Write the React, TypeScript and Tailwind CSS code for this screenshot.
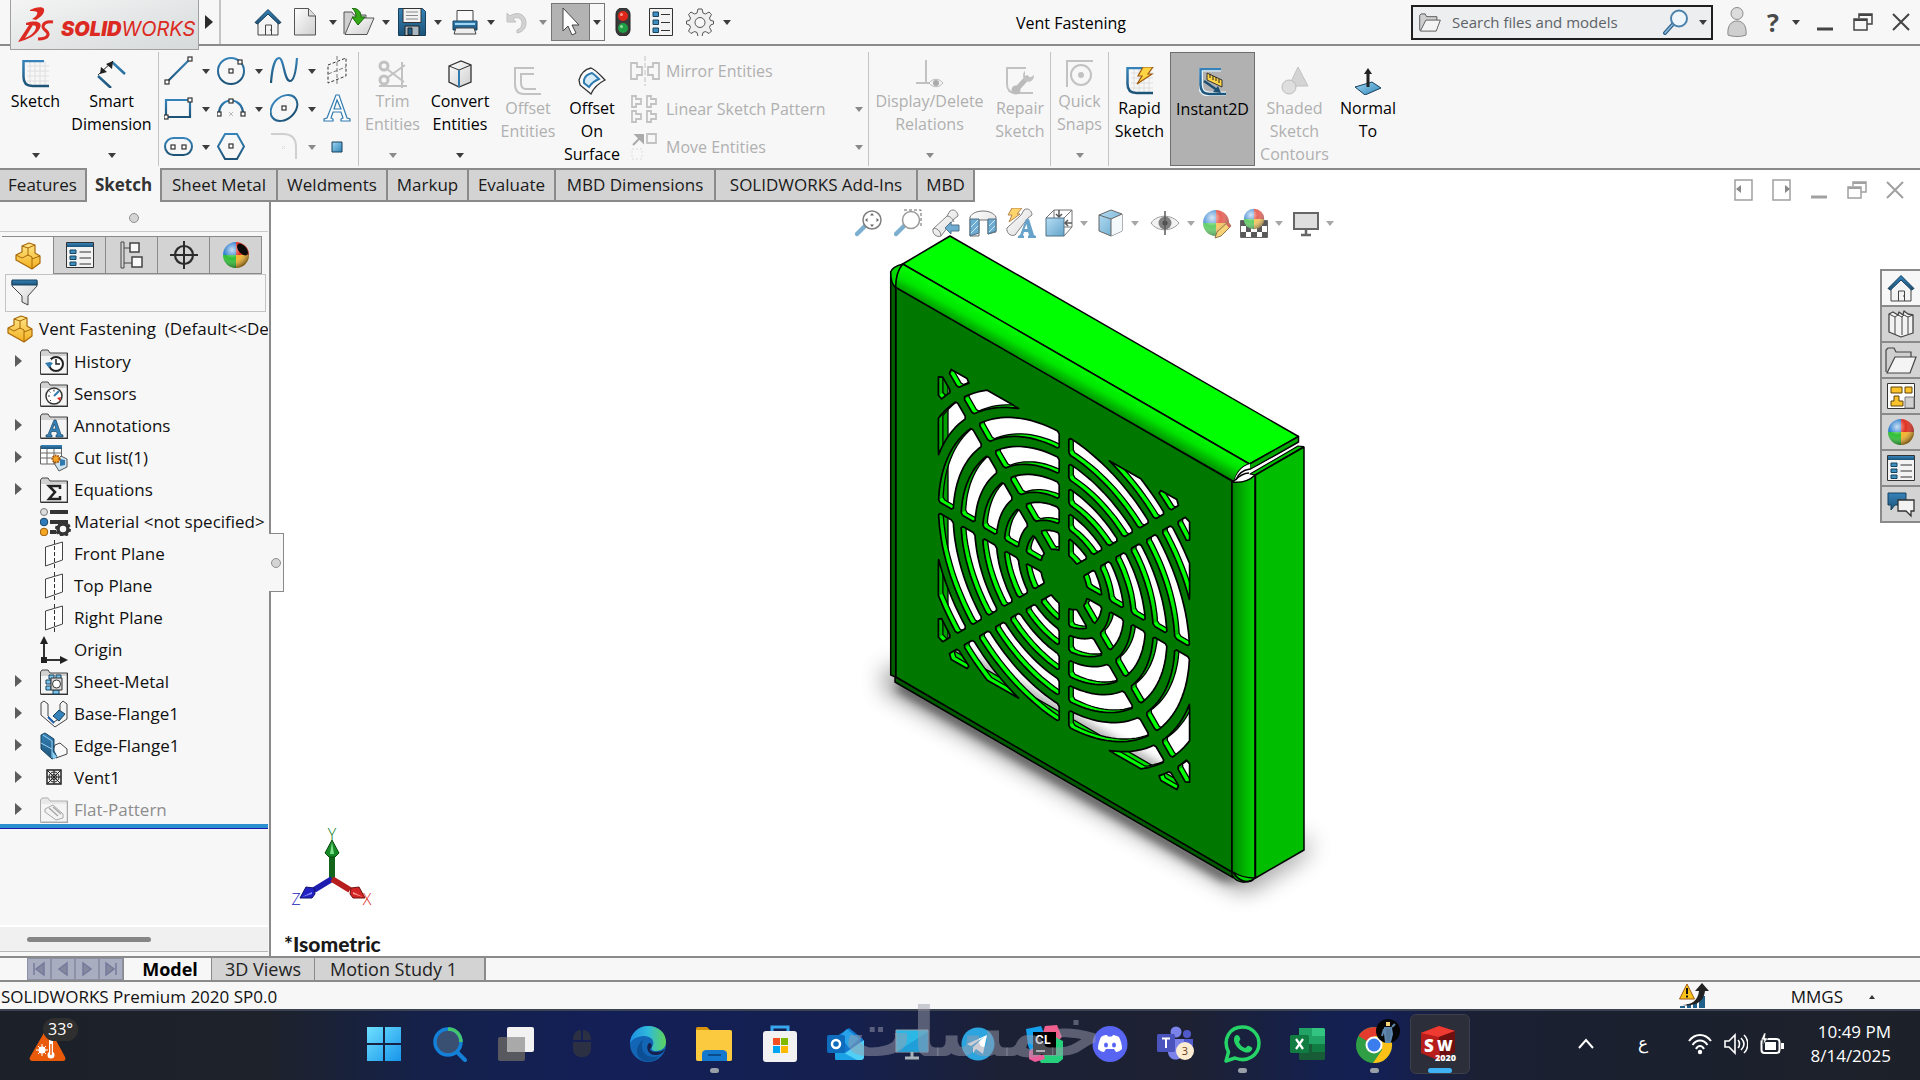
import type { ReactNode } from "react";

type Kids = { children?: ReactNode };

/* ---------- shared drawing helpers ---------- */

const Pic = ({ w = 28, h = 28, vb, children, className = "" }: Kids & { w?: number; h?: number; vb?: string; className?: string }) => (
    <svg width={w} height={h} viewBox={vb ?? `0 0 ${w} ${h}`} fill="none" className={`shrink-0 ${className}`} aria-hidden="true">
        {children}
    </svg>
);

const Caret = ({ dim = false, className = "" }: { dim?: boolean; className?: string }) => (
    <svg width="8" height="5" viewBox="0 0 8 5" className={`shrink-0 ${className}`} aria-hidden="true">
        <path d="M0 0h8L4 5z" fill={dim ? "#8a8a8a" : "#3c3c3c"} />
    </svg>
);

const Defs = () => (
    <svg width="0" height="0" className="absolute" aria-hidden="true">
        <defs>
            <linearGradient id="blue" x1="0" y1="0" x2="0" y2="1">
                <stop offset="0" stopColor="#3583ba" />
                <stop offset="1" stopColor="#1d5377" />
            </linearGradient>
            <linearGradient id="sky" x1="0" y1="0" x2="1" y2="1">
                <stop offset="0" stopColor="#9fd4f2" />
                <stop offset="1" stopColor="#2f86b8" />
            </linearGradient>
            <linearGradient id="paper" x1="0" y1="0" x2="1" y2="1">
                <stop offset="0" stopColor="#ffffff" />
                <stop offset="1" stopColor="#cfcfcf" />
            </linearGradient>
            <linearGradient id="gold" x1="0" y1="0" x2="0" y2="1">
                <stop offset="0" stopColor="#ffe68a" />
                <stop offset="1" stopColor="#f2b01e" />
            </linearGradient>
            <radialGradient id="shine" cx="0.35" cy="0.3" r="0.75">
                <stop offset="0" stopColor="#ffffff" stopOpacity="0.75" />
                <stop offset="0.45" stopColor="#ffffff" stopOpacity="0" />
                <stop offset="1" stopColor="#000000" stopOpacity="0.55" />
            </radialGradient>
            <linearGradient id="winlogo" x1="0" y1="0" x2="1" y2="1">
                <stop offset="0" stopColor="#6fe0ff" />
                <stop offset="1" stopColor="#1795ea" />
            </linearGradient>
            <linearGradient id="edge" x1="0" y1="0" x2="1" y2="0">
                <stop offset="0" stopColor="#1d8fe0" />
                <stop offset="0.5" stopColor="#2fb9dc" />
                <stop offset="1" stopColor="#5fd35a" />
            </linearGradient>
        </defs>
    </svg>
);

/* ---------- title bar icons ---------- */

const HomeIcon = () => (
    <Pic>
        <path d="M4 13v14h20V13L14 4z" fill="#f4f4f4" stroke="#444" />
        <path d="M11.500 27V17h6v10M16 22h1" stroke="#444" />
        <path d="M1 14.500 14 1.500l13 13-2.500 1.500L14 6 3.500 16z" fill="url(#blue)" stroke="#153e5c" />
    </Pic>
);

const PageIcon = () => (
    <Pic w={24}>
        <path d="M1.500.5h14l7 7.500v19h-21z" fill="url(#paper)" stroke="#555" />
        <path d="M15.500.5V8h7" fill="#ddd" stroke="#555" />
    </Pic>
);

const OpenIcon = () => (
    <Pic w={32}>
        <path d="M1 26V4h8l2 3h12v5" fill="#cfcfcf" stroke="#555" />
        <path d="M2 26.500 9 10h22l-7 16.500z" fill="url(#paper)" stroke="#555" />
        <path d="M9 0c6 .500 9 3 9 9h4l-7 8-6-8h4C13 5 12 3 9 0z" fill="#35a815" stroke="#17690a" />
    </Pic>
);

const SaveIcon = () => (
    <Pic w={28}>
        <path d="M.5.500h24l3 3v24H.5z" fill="url(#blue)" stroke="#16405c" />
        <path d="M5 .500h18v14H5z" fill="#f2f2f2" stroke="#333" />
        <path d="M8 4h12M8 7.500h12M8 11h12" stroke="#888" />
        <path d="M7 18h14v9.500H7z" fill="#a9b8c2" stroke="#222" />
        <path d="M10 20h4v7h-4z" fill="#1f5f8a" stroke="#222" />
    </Pic>
);

const PrintIcon = () => (
    <Pic w={26}>
        <path d="M5 14V2.500h16V14" fill="#fafafa" stroke="#444" />
        <path d="M1 13h24v9H1z" fill="url(#blue)" stroke="#16405c" />
        <path d="M4 20h18l2 6H2z" fill="#eee" stroke="#444" />
        <path d="M3 16h20" stroke="#9fd4f2" strokeWidth="2" />
    </Pic>
);

const UndoIcon = () => (
    <Pic w={24}>
        <path d="M1 5v9h9l-3-3c4-3 9-1 9 4 0 4-2 6-5 7v3c6-1 9-5 9-10C20 6 11 3 4 8z" fill="#d2d2d2" stroke="#c0c0c0" />
    </Pic>
);

const PointerIcon = () => (
    <Pic w={22} h={30}>
        <path d="M3 1v23l5-5 4 9 4-2-4-8h7z" fill="#fff" stroke="#444" />
    </Pic>
);

const TrafficIcon = () => (
    <Pic w={16} h={28}>
        <rect x="1" y="0" width="14" height="28" rx="6" fill="#3a3a3a" stroke="#222" />
        <circle cx="8" cy="8" r="5" fill="#e0261b" />
        <circle cx="8" cy="20" r="5" fill="#1f9e45" />
        <circle cx="6.500" cy="6.500" r="1.500" fill="#ff9a90" />
        <circle cx="6.500" cy="18.500" r="1.500" fill="#8fe0a5" />
    </Pic>
);

const ListIcon = ({ header = false }: { header?: boolean }) =>
    header ? (
        <Pic w={28} h={26}>
            <path d="M.5.500h27v25H.5z" fill="#f3f3f3" stroke="#333" />
            <path d="M1 1h26v4H1z" fill="url(#blue)" />
            <path d="M4 8h6v3.500H4zM4 14h6v3.500H4zM4 20h6v3.500H4z" fill="#3d8fbf" stroke="#17435f" />
            <path d="M13.500 10H25M13.500 16H25M13.500 22H25" stroke="#333" />
        </Pic>
    ) : (
        <Pic w={24}>
            <path d="M.5.500h23v27H.5z" fill="#f3f3f3" stroke="#333" />
            <path d="M4 4h5.500v4.500H4zM4 12h5.500v4.500H4zM4 20h5.500v4.500H4z" fill="#3d8fbf" stroke="#17435f" />
            <path d="M12 6.500h9M12 14.500h9M12 22.500h9" stroke="#333" />
        </Pic>
    );

const GearIcon = () => (
    <Pic w={28}>
        <path
            d="M12 1h4l1 4 2.500 1 3.500-2 2.500 2.500-2 3.500 1 2.500 3 .500v3l-3 1-1 2.500 2 3.500-2.500 2.500-3.500-2-2.500 1-1 4h-4l-1-4-2.500-1-3.500 2L2.500 23l2-3.500-1-2.500-3-1v-3l3-.500 1-2.500-2-3.500L5 4l3.500 2L11 5z"
            fill="#f0f0f0"
            stroke="#555"
            strokeLinejoin="round"
        />
        <circle cx="14" cy="14.500" r="5" fill="#f7f7f7" stroke="#555" />
    </Pic>
);

const LensIcon = () => (
    <Pic w={26} h={26}>
        <path d="m2 24 9-10" stroke="#2d5f86" strokeWidth="4" strokeLinecap="round" />
        <path d="m2 24 9-10" stroke="#8dbde0" strokeWidth="1.500" strokeLinecap="round" />
        <circle cx="16" cy="9.500" r="8" fill="#eef6fb" stroke="#4b82ab" strokeWidth="2" />
    </Pic>
);

const FolderOpenIcon = ({ w = 20 }: { w?: number }) => (
    <Pic w={w} h={Math.round(w * 0.85)} vb="0 0 32 27">
        <path d="M1 25V3l2-2h6l2 4h15v6" fill="#cfcfcf" stroke="#444" strokeWidth="1.200" />
        <path d="M2 26 10 10h21l-6 16z" fill="#f4f4f4" stroke="#444" strokeWidth="1.200" />
    </Pic>
);

const UserIcon = () => (
    <Pic w={20} h={30}>
        <circle cx="10" cy="6.500" r="6" fill="#dcdcdc" stroke="#8a8a8a" />
        <path d="M1 28c-1-9 3-14 9-14s10 5 9 14c-5 2-13 2-18 0z" fill="#cfcfcf" stroke="#8a8a8a" />
    </Pic>
);

const WindowButtons = ({ color }: { color: string }) => (
    <div className="flex items-center gap-[19px]">
        <button aria-label="Minimize">
            <Pic w={18} h={18}><path d="M1 16h16" stroke={color} strokeWidth="3" /></Pic>
        </button>
        <button aria-label="Restore">
            <Pic w={20} h={18}>
                <path d="M6 5V1h13v10h-5" stroke={color} strokeWidth="1.500" />
                <path d="M1 6h13v11H1z" stroke={color} strokeWidth="1.500" />
                <path d="M6 2h13M1 7h13" stroke={color} strokeWidth="2" />
            </Pic>
        </button>
        <button aria-label="Close">
            <Pic w={18} h={18}><path d="m1 1 16 16M17 1 1 17" stroke={color} strokeWidth="2" /></Pic>
        </button>
    </div>
);

const TitleBar = () => (
    <header className="flex h-[46px] shrink-0 items-center border-b-2 border-[#8a8a8a] bg-[#f7f7f7]">
        <div className="relative z-10 ml-[10px] flex h-[50px] w-[189px] shrink-0 items-center self-start border border-t-0 border-[#a0a0a0] bg-gradient-to-br from-[#f4f4f4] to-[#d6dadb] pl-[6px]">
            <Pic w={38} h={38}>
                <path d="M13 4c5-3 13-4 14-1 1 4-3 8-8 11l-4-1c4-2 6-5 5-7-1-1-4-1-7-1z" fill="#dc2a23" />
                <path d="M9 17c10-3 17-1 14 5C20 29 10 34 1 36L12 19l4 0-8 13c6-2 11-7 11-11 0-2-5-2-10-2z" fill="#dc2a23" />
                <path d="M36 16c-6-1-10 1-10 5 0 3 6 4 5 8-1 3-5 4-10 4" stroke="#dc2a23" strokeWidth="3" />
            </Pic>
            <span className="mt-[9px] ml-[6px] font-[Inter] text-[20px] leading-none text-[#dc2a23] italic">
                <b className="font-black">SOLID</b>WORKS
            </span>
        </div>
        <button aria-label="Show menus" className="flex h-full w-[22px] items-center justify-center border-r-2 border-[#c4c4c4]">
            <Pic w={8} h={14}><path d="M0 0v14l8-7z" fill="#2b2b2b" /></Pic>
        </button>
        <div className="ml-[33px] flex shrink-0 items-center">
            <button aria-label="Home" className="w-[36px]"><HomeIcon /></button>
            <button aria-label="New" className="flex items-center gap-[12px] pr-[6px] pl-[3px]"><PageIcon /><Caret /></button>
            <button aria-label="Open" className="flex items-center gap-[7px] pr-[8px]"><OpenIcon /><Caret /></button>
            <button aria-label="Save" className="flex items-center gap-[8px] pr-[10px]"><SaveIcon /><Caret /></button>
            <button aria-label="Print" className="flex items-center gap-[9px] pr-[11px]"><PrintIcon /><Caret /></button>
            <button aria-label="Undo" className="flex items-center gap-[9px] pr-[4px]"><UndoIcon /><Caret dim /></button>
            <button aria-label="Select" className="flex h-[38px] border border-[#777]">
                <span className="flex w-[38px] items-center justify-center border-r border-[#777] bg-[#b3b3b3]"><PointerIcon /></span>
                <span className="flex w-[14px] items-center justify-center"><Caret /></span>
            </button>
            <button aria-label="Rebuild" className="pr-[18px] pl-[10px]"><TrafficIcon /></button>
            <button aria-label="File properties" className="pr-[13px]"><ListIcon /></button>
            <button aria-label="Options" className="flex items-center gap-[9px]"><GearIcon /><Caret /></button>
        </div>
        <h1 className="flex-1 pt-[2px] text-center text-[16px] text-black">Vent Fastening</h1>
        <div className="flex shrink-0 items-center pr-[10px]">
            <label className="flex h-[35px] w-[302px] items-center border-2 border-[#1f1f1f] bg-[#eceef0] pl-[6px]">
                <FolderOpenIcon w={22} />
                <input
                    aria-label="Search files and models"
                    placeholder="Search files and models"
                    className="min-w-0 flex-1 bg-transparent pl-[11px] text-[15px] text-black outline-none placeholder:text-[#5c6266]"
                />
                <LensIcon />
                <Caret className="mr-[4px] ml-[10px]" />
            </label>
            <button aria-label="Sign in" className="ml-[14px]"><UserIcon /></button>
            <button aria-label="Help" className="ml-[20px] flex items-center gap-[13px]">
                <span className="text-[25px] leading-none font-bold text-[#4a4a4a]">?</span>
                <Caret />
            </button>
            <div className="ml-[16px]"><WindowButtons color="#444" /></div>
        </div>
    </header>
);

/* ---------- ribbon ---------- */

const SketchGlyph = ({ grid = true, color = "url(#blue)" }: { grid?: boolean; color?: string }) => (
    <>
        {grid && <path d="M5 6h22M5 11h22M5 16h22M5 21h22M8 1v26M13 1v26M18 1v26M23 1v26" stroke="#dedede" />}
        <path d="M22 1H1.500v16c0 6 3 9 9 9H27" stroke={color} strokeWidth="2.500" />
    </>
);

const Dot = ({ x, y }: { x: number; y: number }) => <rect x={x - 2} y={y - 2} width="4" height="4" fill="#fff" stroke="#333" strokeWidth="1.200" />;

const BigButton = ({ icon, lines, width, caret, off, low, active }: {
    icon: ReactNode; lines: string[]; width: string; caret?: boolean; off?: boolean; low?: boolean; active?: boolean;
}) => (
    <button
        disabled={off}
        className={`relative flex h-[114px] shrink-0 flex-col items-center self-start text-[16px] leading-[23px] ${width} ${low ? "pt-[13px]" : "pt-[6px]"} ${off ? "text-[#b0b0b0]" : "text-black"} ${active ? "border border-[#6e6e6e] bg-[#b1b1b1]" : ""}`}
    >
        <span className="flex h-[32px] items-center">{icon}</span>
        {lines.map((line) => (
            <span key={line} className="whitespace-nowrap">{line}</span>
        ))}
        {caret && <Caret dim={off} className="mt-auto mb-[8px]" />}
    </button>
);

const Rule = () => <div className="h-[114px] w-px shrink-0 self-start bg-[#c4c4c4]" />;

const sketchTools: { label: string; icon: ReactNode; caret?: boolean; dim?: boolean }[] = [
    { label: "Line", caret: true, icon: <><path d="M3 26 26 3" stroke="url(#blue)" strokeWidth="2.200" /><Dot x={3} y={26} /><Dot x={26} y={3} /></> },
    { label: "Circle", caret: true, icon: <><circle cx="14" cy="15" r="13" stroke="url(#blue)" strokeWidth="2" /><Dot x={14} y={15} /><Dot x={23} y={6} /></> },
    { label: "Spline", caret: true, icon: <path d="M1 27C2 12 5 2 9 2c5 0 5 23 11 23 4 0 6-10 7-23" stroke="url(#blue)" strokeWidth="2.200" /> },
    { label: "Plane", icon: <><path d="m5 9 18-7v18L5 27z" stroke="#333" strokeDasharray="3 2" /><path d="M14 0v29M5 18l18-7" stroke="#777" strokeDasharray="4 2" /></> },
    { label: "Rectangle", caret: true, icon: <><path d="M2 6h24v17H2z" stroke="url(#blue)" strokeWidth="2.200" /><Dot x={2} y={23} /><Dot x={26} y={6} /></> },
    { label: "Arc", caret: true, icon: <><path d="M2 20C2 2 26 2 26 20" stroke="url(#blue)" strokeWidth="2.200" /><path d="m12 18 4 4m0-4-4 4" stroke="#bbb" /><Dot x={2} y={20} /><Dot x={26} y={20} /><Dot x={14} y={7} /></> },
    { label: "Ellipse", caret: true, icon: <><ellipse cx="14" cy="14" rx="15" ry="11" transform="rotate(-42 14 14)" stroke="url(#blue)" strokeWidth="2" /><Dot x={14} y={14} /></> },
    { label: "Text", icon: <path d="M1 27v-2l3-1L13 1h3l8 23 3 1v2h-9v-2l2-1-2-6h-8l-2 6 2 1v2zM11 15h7L14 6z" fill="#fff" stroke="#2f7bb0" strokeWidth="1.200" /> },
    { label: "Slot", caret: true, icon: <><rect x="1" y="6" width="27" height="17" rx="8.500" stroke="url(#blue)" strokeWidth="2" /><Dot x={9} y={15} /><Dot x={20} y={15} /></> },
    { label: "Polygon", icon: <><path d="M8 2h12l7 12.500L20 27H8L1 14.500z" stroke="url(#blue)" strokeWidth="2" /><Dot x={14} y={14} /></> },
    { label: "Fillet", caret: true, dim: true, icon: <><path d="M1 2h12c9 0 13 5 13 13v12" stroke="#cfcfcf" strokeWidth="2" /><path d="m12 14 3 3m0-3-3 3" stroke="#ddd" /></> },
    { label: "Point", icon: <path d="M9 10h10v10H9z" fill="url(#sky)" stroke="#16405c" /> },
];

const rowTools = [
    {
        label: "Mirror Entities",
        icon: <><path d="M1 7h6v4h5v8H7v4H1zM29 7h-6v4h-5v8h5v4h6z" stroke="#c2c2c2" strokeWidth="1.800" /><path d="M15 0v30" stroke="#c2c2c2" strokeDasharray="5 2" /></>,
    },
    {
        label: "Linear Sketch Pattern",
        caret: true,
        icon: <path d="M2 2h4v3h5v5H6v3H2zM17 2h4v3h5v5h-5v3h-4zM2 17h4v3h5v5H6v3H2zM17 17h4v3h5v5h-5v3h-4z" stroke="#c2c2c2" strokeWidth="1.800" />,
    },
    {
        label: "Move Entities",
        caret: true,
        icon: <><path d="M17 2h9v9h-9z" stroke="#c2c2c2" strokeWidth="1.800" /><path d="m3 13 8-8M6 3h7v7z" stroke="#aaa" strokeWidth="2" fill="#aaa" /><path d="M2 17h10v10H2z" stroke="#ddd" strokeDasharray="2 2" /></>,
    },
];

const Ribbon = () => (
    <section aria-label="Sketch commands" className="flex h-[122px] shrink-0 items-center overflow-hidden bg-[#f7f7f7] pt-[6px]">
        <BigButton width="w-[71px]" caret lines={["Sketch"]} icon={<Pic><SketchGlyph /></Pic>} />
        <BigButton
            width="w-[81px]" caret lines={["Smart", "Dimension"]}
            icon={<Pic w={30}><path d="M1 16 14 28M15 2l13 12" stroke="url(#blue)" strokeWidth="2.500" /><path d="M1 15 16 1" stroke="#222" /><path d="m3 14 1-7 6 5zM16 1l-1 8-6-5z" fill="#222" /></Pic>}
        />
        <div className="ml-[6px] grid h-[114px] w-[200px] shrink-0 grid-cols-[53px_53px_53px_35px] grid-rows-3 self-start border-l border-[#c4c4c4] pl-[5px]">
            {sketchTools.map((tool) => (
                <button key={tool.label} aria-label={tool.label} className="flex items-center gap-[8px]">
                    <Pic w={30} h={30}>{tool.icon}</Pic>
                    {tool.caret && <Caret dim={tool.dim} />}
                </button>
            ))}
        </div>
        <Rule />
        <BigButton
            width="w-[67px]" caret off lines={["Trim", "Entities"]}
            icon={<Pic w={30}><circle cx="6" cy="6" r="4" stroke="#c2c2c2" strokeWidth="3" /><circle cx="6" cy="20" r="4" stroke="#c2c2c2" strokeWidth="3" /><path d="m9 9 17 13M9 18 27 5M1 26h28M24 2v26" stroke="#c2c2c2" strokeWidth="2" /></Pic>}
        />
        <BigButton
            width="w-[68px]" caret lines={["Convert", "Entities"]}
            icon={<Pic w={26}><path d="M2 6 14 1l10 4v17l-12 5-10-5z" fill="url(#paper)" stroke="#333" strokeWidth="1.300" /><path d="m2 6 10 4 12-5" stroke="#333" /><path d="M12 10v17" stroke="#2f7bb0" strokeWidth="2" /></Pic>}
        />
        <BigButton width="w-[68px]" low off lines={["Offset", "Entities"]} icon={<Pic><path d="M20 1H1v16c0 6 3 10 9 10h17" stroke="#c2c2c2" strokeWidth="2" /><path d="M20 7H7v9c0 4 1 6 5 6h10" stroke="#c2c2c2" strokeWidth="2" /></Pic>} />
        <BigButton
            width="w-[60px]" low lines={["Offset", "On", "Surface"]}
            icon={<Pic w={28}><path d="M1 13C3 6 8 2 13 1c5 2 10 8 14 12-6 3-11 7-14 14L2 18z" fill="#fafafa" stroke="#333" strokeWidth="1.300" /><path d="M6 13c1-4 4-6 8-7 3 2 5 4 7 6-5 2-8 5-10 8l-5-4z" fill="#d8ecf8" stroke="#2f7bb0" strokeWidth="2" /></Pic>}
        />
        <div className="flex h-[114px] w-[246px] shrink-0 flex-col self-start pl-[8px] text-[16px] text-[#b0b0b0]">
            {rowTools.map((tool) => (
                <button key={tool.label} disabled className="flex h-[38px] items-center">
                    <Pic w={30} h={30}>{tool.icon}</Pic>
                    <span className="ml-[6px]">{tool.label}</span>
                    {tool.caret && <Caret dim className="mr-[5px] ml-auto" />}
                </button>
            ))}
        </div>
        <Rule />
        <BigButton
            width="w-[121px]" caret off lines={["Display/Delete", "Relations"]}
            icon={<Pic w={30}><path d="M1 23h14M11 0v23" stroke="#c2c2c2" strokeWidth="2" /><path d="M14 23c4-5 10-5 14 0-4 5-10 5-14 0z" fill="#f2f2f2" stroke="#bbb" /><circle cx="21" cy="23" r="3" fill="#aaa" /></Pic>}
        />
        <BigButton
            width="w-[60px]" low off lines={["Repair", "Sketch"]}
            icon={<Pic><path d="M20 1H1v16c0 6 3 9 9 9h17" stroke="#c2c2c2" strokeWidth="2" /><path d="m9 24 12-13" stroke="#bbb" strokeWidth="5" strokeLinecap="round" /><path d="M19 4v6h6l3-2c0 6-4 8-9 6-3-4-2-9 0-10z" fill="#c2c2c2" /><circle cx="10" cy="23" r="4.500" fill="#bbb" /></Pic>}
        />
        <Rule />
        <BigButton width="w-[57px]" caret off lines={["Quick", "Snaps"]} icon={<Pic><path d="M27 1H1v26" stroke="#c2c2c2" strokeWidth="2" /><circle cx="15" cy="15" r="10" stroke="#c2c2c2" strokeWidth="2" /><circle cx="15" cy="15" r="3" fill="#c2c2c2" /></Pic>} />
        <Rule />
        <BigButton
            width="w-[61px]" low lines={["Rapid", "Sketch"]}
            icon={<Pic><SketchGlyph /><path d="M17 0h10l-5 7h4L11 17l5-8h-4z" fill="#fdd443" stroke="#a05a10" strokeWidth="1.200" /></Pic>}
        />
        <BigButton
            width="w-[85px]" low active lines={["Instant2D"]}
            icon={<Pic><path d="M22 1H1.500v16c0 6 3 9 9 9H27" stroke="#e8f4fb" strokeWidth="5" /><SketchGlyph grid={false} /><path d="m8 5 15 7v7L8 12z" fill="#fdd443" stroke="#333" /><path d="M11 6v4M14 8v4M17 9v4M20 11v4" stroke="#222" /><path d="m5 13 13 9" stroke="#1c4f72" strokeWidth="2.500" /><path d="m22 25-8-1 5-6z" fill="#1c4f72" /></Pic>}
        />
        <BigButton width="w-[79px]" low off lines={["Shaded", "Sketch", "Contours"]} icon={<Pic><path d="m17 0 10 19H8z" fill="#d4d4d4" stroke="#c2c2c2" /><circle cx="8" cy="20" r="7" fill="#dedede" stroke="#bcbcbc" /></Pic>} />
        <BigButton
            width="w-[68px]" low lines={["Normal", "To"]}
            icon={<Pic><path d="m1 20 17-5 9 6-16 7z" fill="url(#sky)" stroke="#16405c" /><path d="M14 20V5" stroke="#222" strokeWidth="3" /><path d="m10 7 4-6 4 6z" fill="#222" /></Pic>}
        />
    </section>
);

const commandTabs = [
    { name: "Features", width: "w-[87px]" },
    { name: "Sketch", width: "w-[75px]" },
    { name: "Sheet Metal", width: "w-[116px]" },
    { name: "Weldments", width: "w-[110px]" },
    { name: "Markup", width: "w-[81px]" },
    { name: "Evaluate", width: "w-[87px]" },
    { name: "MBD Dimensions", width: "w-[160px]" },
    { name: "SOLIDWORKS Add-Ins", width: "w-[202px]" },
    { name: "MBD", width: "w-[57px]" },
];

const CommandTabs = () => (
    <nav className="flex h-[34px] shrink-0 border-t-2 border-[#8a8a8a] bg-white text-[17px]">
        {commandTabs.map((tab) => (
            <button
                key={tab.name}
                className={`shrink-0 border-r-2 border-[#8a8a8a] whitespace-nowrap ${tab.width} ${tab.name === "Sketch" ? "-mt-[2px] bg-[#f7f7f7] font-bold text-[#333]" : "border-b-2 bg-[#d3d3d3] text-[#1a1a1a]"}`}
            >
                {tab.name}
            </button>
        ))}
    </nav>
);

/* ---------- feature tree ---------- */

const PartIcon = () => (
    <Pic w={26}>
        <path d="m1 13 6-3V4l7-3 6 2v8l5 3v7l-8 6L1 18z" fill="url(#gold)" stroke="#a8690a" strokeWidth="1.200" strokeLinejoin="round" />
        <path d="m7 4 6 2 7-3M13 6v8M1 13l6 3 6-3 4 2v12M17 17l8-3" stroke="#a8690a" />
    </Pic>
);

const Ball = ({ w = 28, hole = false }: { w?: number; hole?: boolean }) => (
    <Pic w={w} h={w} vb="0 0 28 28">
        <path d="M14 14V1A13 13 0 0 0 1 14z" fill="#2f7fd0" />
        <path d="M14 14V1a13 13 0 0 1 13 13z" fill="#e03022" />
        <path d="M14 14H1a13 13 0 0 0 13 13z" fill="#2fbf35" />
        <path d="M14 14h13a13 13 0 0 1-13 13z" fill="#f5b32a" />
        <circle cx="14" cy="14" r="13" fill="url(#shine)" />
        {hole && <ellipse cx="20.500" cy="8.500" rx="4" ry="7" transform="rotate(-40 20.500 8.500)" fill="#0a0a0a" />}
    </Pic>
);

const FolderIcon = ({ children, dim }: Kids & { dim?: boolean }) => (
    <Pic w={28} h={26}>
        <g opacity={dim ? 0.4 : 1}>
            <path d="M.5 25V3l1.500-2h6l2 3h17.500v21z" fill="#d2d2d2" stroke="#444" />
            <path d="M3 7h24v17.500H1V7z" fill="#f4f4f4" />
            <path d="M.5 25.500h27V4" stroke="#333" strokeWidth="1.500" />
            {children}
        </g>
    </Pic>
);

const PlaneIcon = () => (
    <Pic w={28}>
        <path d="m5.500 7 17-5v18l-17 6z" fill="#fdfdfd" stroke="#444" />
        <path d="M14.500 0v28" stroke="#333" strokeDasharray="4 2" />
    </Pic>
);

const tree: { name: string; arrow?: boolean; dim?: boolean; icon: ReactNode }[] = [
    { name: "History", arrow: true, icon: <FolderIcon><circle cx="16" cy="15" r="7" fill="#fff" stroke="#222" strokeWidth="2" /><path d="M16 10v5h4" stroke="#222" strokeWidth="1.500" /><path d="M9 10v6" stroke="#f4f4f4" strokeWidth="4" /><path d="m5 14 5-1 3 1-4 5z" fill="#2f7bb0" /></FolderIcon> },
    { name: "Sensors", icon: <FolderIcon><circle cx="14" cy="15" r="8" fill="#fff" stroke="#333" strokeWidth="1.500" /><path d="m14 15 5-5" stroke="#2f7bb0" strokeWidth="2" /><path d="m17 17 4-1-1 4z" fill="#e0261b" /><path d="M8 15h2M14 8.500v2M9.500 10.500l1 1M10 20l1-1" stroke="#333" /></FolderIcon> },
    { name: "Annotations", arrow: true, icon: <FolderIcon><path d="M6 24v-2l2-.500L14 7h2l5 14.500 2 .500v2h-7v-2l1.500-.500-1-3h-5l-1 3 1.500.500v2zM12.500 16h3.500l-1.700-5z" fill="#3583ba" stroke="#17435f" strokeWidth=".7" /></FolderIcon> },
    {
        name: "Cut list(1)", arrow: true,
        icon: <Pic w={28}><path d="M.5 2h21v18H.5zM.5 9h21M.5 14h21M7 5v15M14 5v15" fill="#fff" stroke="#666" /><path d="M1 1h21v4H1z" fill="url(#blue)" /><path d="m14 19 7-7 6 3v8l-8 4z" fill="#cfe3ef" stroke="#555" /><path d="m20 15 5 1v5l-5 1z" fill="#2f7bb0" /><circle cx="16" cy="15" r="3.500" fill="#f7a42a" stroke="#a0520a" strokeDasharray="1.500 1" strokeWidth="2" /></Pic>,
    },
    { name: "Equations", arrow: true, icon: <FolderIcon><path d="M20 12V9H9l6 6-6 7h11v-3" stroke="#222" strokeWidth="2.500" /></FolderIcon> },
    {
        name: "Material <not specified>",
        icon: <Pic w={32} h={28}><circle cx="4" cy="4" r="3.500" fill="#ddd" stroke="#777" /><circle cx="4" cy="14" r="3.800" fill="#2f7bc0" stroke="#17435f" /><circle cx="4" cy="24" r="3.800" fill="#f5a623" stroke="#9a5c08" /><path d="M10 4h18M10 14h18M10 24h6" stroke="#333" strokeWidth="4" /><circle cx="23" cy="21" r="5" fill="#f7f7f7" stroke="#333" strokeWidth="3.500" /><circle cx="23" cy="21" r="7" stroke="#333" strokeWidth="2" strokeDasharray="3 2.500" /></Pic>,
    },
    { name: "Front Plane", icon: <PlaneIcon /> },
    { name: "Top Plane", icon: <PlaneIcon /> },
    { name: "Right Plane", icon: <PlaneIcon /> },
    { name: "Origin", icon: <Pic w={28}><path d="M4 24V6M4 24h18" stroke="#333" strokeWidth="2" /><path d="m0 8 4-8 4 8zM20 20l8 4-8 4zM1 21h6v6H1z" fill="#222" /></Pic> },
    { name: "Sheet-Metal", arrow: true, icon: <FolderIcon><path d="M9 6h5v4H9zM16 6h5v4h-5zM6 11h5v4H6zM6 17h5v4H6zM13 21h6v4h-6z" fill="#7cc6ee" stroke="#17435f" /><path d="M11 9h11v12H11z" fill="#d8d8d8" stroke="#333" /><circle cx="16.500" cy="15" r="4" fill="#fff" stroke="#333" /></FolderIcon> },
    {
        name: "Base-Flange1", arrow: true,
        icon: <Pic w={28}><path d="m1 3 3-2 4 3v12l6 6 6-4V4l3-3 4 3v15l-12 8L1 15z" fill="#f4f4f4" stroke="#444" strokeLinejoin="round" /><path d="m13 16 6-6 6 4-6 7z" fill="#3583ba" stroke="#17435f" /><path d="m8 17 6 6" stroke="#1f5fb0" strokeWidth="2" /></Pic>,
    },
    {
        name: "Edge-Flange1", arrow: true,
        icon: <Pic w={28}><path d="m15 13 5-2 7 6v5l-11 4-4-6z" fill="#fafafa" stroke="#444" /><path d="m1 3 4-2 9 6v12l3 6-5 2L1 17z" fill="url(#blue)" stroke="#17435f" /><path d="m1 11 11 6v9M3 3l9 6v8" stroke="#9fd4f2" /><path d="m12 19 5 6-4 2z" fill="#8fd0f4" /></Pic>,
    },
    { name: "Vent1", arrow: true, icon: <Pic w={28}><path d="M7 6h14v14H7z" fill="#eee" stroke="#222" strokeWidth="1.500" /><circle cx="14" cy="13" r="5" stroke="#222" /><circle cx="14" cy="13" r="2.500" stroke="#222" /><path d="M7 6l14 14M21 6 7 20M14 6v14M7 13h14" stroke="#222" /></Pic> },
    { name: "Flat-Pattern", arrow: true, dim: true, icon: <FolderIcon dim><path d="m5 12 8-4 10 9v4l-7 2L5 15z" fill="#eee" stroke="#333" /><path d="m9 11 9 8M13 10l8 7" stroke="#333" strokeWidth="1.500" /></FolderIcon> },
];

const panelTabs: { label: string; icon: ReactNode }[] = [
    { label: "FeatureManager", icon: <PartIcon /> },
    { label: "PropertyManager", icon: <ListIcon header /> },
    { label: "ConfigurationManager", icon: <Pic w={24}><path d="M1 1h3v26H1zM4 7h6M4 22h8" stroke="#444" /><path d="M10 2h9v9h-9zM12 16h10v10H12z" fill="#fafafa" stroke="#444" strokeWidth="1.500" /></Pic> },
    { label: "DimXpertManager", icon: <Pic><circle cx="14" cy="14" r="9" stroke="#2b2b2b" strokeWidth="2.200" /><path d="M14 0v28M0 14h28" stroke="#2b2b2b" strokeWidth="2" /></Pic> },
    { label: "DisplayManager", icon: <Ball hole /> },
];

const FeaturePanel = () => (
    <aside className="relative flex w-[271px] shrink-0 flex-col border-r-2 border-[#8a8a8a] bg-[#f7f7f7] pr-[1px]">
        <div className="flex h-[30px] shrink-0 items-center justify-center border-b border-[#c9c9c9]">
            <span className="mt-[3px] h-[10px] w-[10px] rounded-full border border-[#8f8f8f] bg-[#d4d4d4]" />
        </div>
        <div role="tablist" className="mt-[4px] ml-[2px] flex h-[38px] w-[260px] shrink-0 border-t border-[#8a8a8a]">
            {panelTabs.map((tab, i) => (
                <button
                    key={tab.label}
                    role="tab"
                    aria-label={tab.label}
                    className={`flex flex-1 items-center justify-center border-r border-[#8a8a8a] ${i === 0 ? "" : "border-b bg-[#d3d3d3]"}`}
                >
                    {tab.icon}
                </button>
            ))}
        </div>
        <label className="mr-[2px] ml-[5px] flex h-[38px] shrink-0 items-center border border-[#c4c4c4] pl-[5px]">
            <Pic w={28}>
                <path d="M1 2h25v5L17 17v9l-6-3v-6L1 7z" fill="url(#paper)" stroke="#444" />
                <path d="M1 1h25v5H1z" fill="url(#blue)" stroke="#17435f" />
            </Pic>
            <input aria-label="Filter tree" className="min-w-0 flex-1 bg-transparent outline-none" />
        </label>
        <ul className="flex min-h-0 flex-col overflow-hidden text-[17px] text-[#111]">
            <li className="flex h-[34px] shrink-0 items-center pl-[7px] whitespace-pre">
                <PartIcon />
                <span className="ml-[6px]">{"Vent Fastening  (Default<<De"}</span>
            </li>
            {tree.map((item) => (
                <li key={item.name} className="flex h-[32px] shrink-0 items-center pl-[15px] whitespace-nowrap">
                    <span className="w-[25px] pb-[2px]">
                        {item.arrow && <Pic w={7} h={12}><path d="M0 0v12l7-6z" fill="#5c5c5c" /></Pic>}
                    </span>
                    <span className="flex w-[34px] justify-start">{item.icon}</span>
                    <span className={item.dim ? "text-[#8d8d8d]" : ""}>{item.name}</span>
                </li>
            ))}
        </ul>
        <div className="-mt-[2px] h-[5px] shrink-0 border-b border-[#1a1ab0] bg-[#2c8fcf]" />
        <div className="flex-1" />
        <div className="flex h-[26px] shrink-0 items-center border-t-2 border-white bg-[#f0f0f0] pl-[27px]">
            <span className="h-[5px] w-[124px] rounded-full bg-[#858585]" />
        </div>
        <div className="h-[5px] shrink-0 border-t border-[#b5b5b5]" />
        {/* splitter grip */}
        <div className="absolute top-[331px] -right-[15px] z-10 flex h-[59px] w-[15px] items-center justify-center border border-l-0 border-[#8a8a8a] bg-[#f7f7f7]">
            <span className="h-[10px] w-[10px] rounded-full border border-[#8f8f8f] bg-[#d4d4d4]" />
        </div>
    </aside>
);

/* ---------- vent model ---------- */

type Pt = [number, number];

const HALF = 145;
const RIB = 5.5;
const BANDS: Pt[] = [[27, 44], [53, 69], [78, 94], [103, 119], [128, 145], [154, 170], [179, 212]];

// face plane (u right, v down) to isometric screen
const iso = ([u, v]: Pt, depth = 0): Pt => [1064 + 0.866 * (u + depth), 579.5 + 0.5 * (u - depth) + v];

const cell = (k: number, [r0, r1]: Pt): Pt[] => {
    const from = (k * Math.PI) / 4;
    const to = from + Math.PI / 4;
    const arc = (r: number, flip: boolean) => {
        const pad = Math.asin(RIB / r);
        const a = from + pad;
        const b = to - pad;
        return Array.from({ length: 17 }, (_, i): Pt => {
            const t = (flip ? 16 - i : i) / 16;
            return [r * Math.cos(a + (b - a) * t), r * Math.sin(a + (b - a) * t)];
        });
    };
    return [...arc(r1, false), ...arc(r0, true)];
};

// trims a polygon to the square boundary, one side at a time
const trim = (poly: Pt[]): Pt[] => {
    const sides: Pt[] = [[1, 0], [-1, 0], [0, 1], [0, -1]];
    return sides.reduce<Pt[]>((pts, [nx, ny]) => {
        const out: Pt[] = [];
        pts.forEach((p, i) => {
            const q = pts[(i + 1) % pts.length];
            const dp = HALF - (p[0] * nx + p[1] * ny);
            const dq = HALF - (q[0] * nx + q[1] * ny);
            if (dp >= 0) out.push(p);
            if (dp >= 0 !== dq >= 0) {
                const t = dp / (dp - dq);
                out.push([p[0] + (q[0] - p[0]) * t, p[1] + (q[1] - p[1]) * t]);
            }
        });
        return out;
    }, poly);
};

const toward = (p: Pt, q: Pt, reach: number): Pt => {
    const len = Math.hypot(q[0] - p[0], q[1] - p[1]);
    const t = Math.min(0.9, reach / len);
    return [p[0] + (q[0] - p[0]) * t, p[1] + (q[1] - p[1]) * t];
};

// corners are cut back, the sharper ones further
const ease = (poly: Pt[]): Pt[] => {
    const pts = poly.filter((p, i) => {
        const q = poly[(i + 1) % poly.length];
        return Math.hypot(q[0] - p[0], q[1] - p[1]) > 0.3;
    });
    return pts.flatMap((p, i) => {
        const a = pts[(i + pts.length - 1) % pts.length];
        const b = pts[(i + 1) % pts.length];
        const ax = p[0] - a[0], ay = p[1] - a[1], bx = b[0] - p[0], by = b[1] - p[1];
        const turn = Math.acos(Math.max(-1, Math.min(1, (ax * bx + ay * by) / (Math.hypot(ax, ay) * Math.hypot(bx, by)))));
        if (turn < 0.6) return [p];
        const reach = turn > 1.9 ? 7 : 2;
        return [toward(p, a, reach), toward(p, b, reach)];
    });
};

const toPath = (pts: Pt[]) => `M${pts.map((p) => `${p[0].toFixed(1)} ${p[1].toFixed(1)}`).join("L")}Z`;

const SHEET = 5.2;

const holes = BANDS.flatMap((band) => Array.from({ length: 8 }, (_, k) => trim(cell(k, band))))
    .filter((poly) => poly.length > 2)
    .map(ease)
    .map((poly) => {
        const walls = poly.map((p, i) => {
            const q = poly[(i + 1) % poly.length];
            const len = Math.hypot(q[0] - p[0], q[1] - p[1]) || 1;
            const nu = -(q[1] - p[1]) / len;
            const nv = (q[0] - p[0]) / len;
            const light = Math.min(255, Math.max(100, 175 * Math.max(nu, 0) + 255 * Math.max(-nv, 0)));
            return { d: toPath([iso(p), iso(q), iso(q, SHEET), iso(p, SHEET)]), color: `rgb(0,${Math.round(light)},0)`, seen: nu - nv > 0 };
        });
        return { front: toPath(poly.map((p) => iso(p))), back: toPath(poly.map((p) => iso(p, SHEET))), walls: walls.filter((w) => w.seen) };
    });

const VentModel = () => (
    <svg width="494" height="720" viewBox="850 220 494 720" fill="none" role="img" aria-label="Vent part in isometric view">
        <defs>
            <linearGradient id="topBend" gradientUnits="userSpaceOnUse" x1="1070" y1="361" x2="1057" y2="384">
                <stop offset="0" stopColor="#00fa00" />
                <stop offset="0.4" stopColor="#00e600" />
                <stop offset="1" stopColor="#007c00" />
            </linearGradient>
            <linearGradient id="sideBend" x1="0" y1="0" x2="1" y2="0">
                <stop offset="0" stopColor="#008200" />
                <stop offset="0.55" stopColor="#00b400" />
                <stop offset="1" stopColor="#00d200" />
            </linearGradient>
            <filter id="soft" x="-20%" y="-20%" width="140%" height="140%">
                <feGaussianBlur stdDeviation="13" />
            </filter>
            <filter id="soft2" x="-20%" y="-50%" width="140%" height="200%">
                <feGaussianBlur stdDeviation="5" />
            </filter>
            {holes.map((hole, i) => (
                <clipPath key={`f${i}`} id={`front${i}`}><path d={hole.front} /></clipPath>
            ))}
            {holes.map((hole, i) => (
                <clipPath key={`b${i}`} id={`back${i}`}><path d={hole.back} /></clipPath>
            ))}
        </defs>

        {/* floor shadow */}
        <path d="M892 668 1244 872l62-34v12l-62 38L884 684z" fill="#000" opacity="0.7" filter="url(#soft)" />
        <path d="M900 682 1236 877l6 4-20 0L896 690z" fill="#000" opacity="0.5" filter="url(#soft2)" />

        <g stroke="#000" strokeWidth="1.500" strokeLinejoin="round">
            <path d="M895 676.700 1233 871.700v6L895 682z" fill="#005a00" />
            <path d="M890.700 272v403l5 2V284z" fill="#006000" />
            <path d="M896 287 1232 481v391L896 677z" fill="#007800" />
            <path d="M950 236 1298.500 436.500 1249.500 464 902.700 264z" fill="#00ff00" />
            <path d="M902.700 264 1249.500 464c-8 2-13 9-15.500 17.700L895 287c0-9 2-17 7.700-23z" fill="url(#topBend)" />
            <path d="M890.700 272c1-4 5-6 12-8-5 6-7 14-7 23-4-2-5-8-5-15z" fill="#00d800" />
            <path d="M1298.500 436.500v5.500L1249.500 470v-6z" fill="#00a800" />
            <path d="M1234 482c2-9 8-16 16-18v6l48-26 5 2-48 27-7 4z" fill="#fff" stroke="none" />
            <path d="M1298 446l5.500.7L1255 475l-5-1z" fill="#00c400" strokeWidth="1.200" />
            <path d="M1236 480c2-6 7-10 14-11" stroke="#000" />
            <path d="M1232 482c8 1 17-1 23-7v403c-3 4-17 8-23-3z" fill="url(#sideBend)" />
            <path d="M1234 481c2-2 9-8 15-8" stroke="#000" />
            <path d="M1255.500 475 1304 447v403l-48.500 28z" fill="#00bd00" />
            <path d="M1233 872c6 4 14 6 22 6-7 6-16 4-22-6z" fill="#00d800" />
        </g>

        {/* vent openings */}
        {holes.map((hole, i) => (
            <g key={i}>
                <g clipPath={`url(#front${i})`}>
                    <path d={hole.front} fill="#006400" />
                    {hole.walls.map((wall, n) => (
                        <path key={n} d={wall.d} fill={wall.color} stroke={wall.color} strokeWidth="0.500" />
                    ))}
                    <g clipPath={`url(#back${i})`}>
                        <path d="M930 350h270v460H930z" fill="#fff" />
                        <path d="M930 637 1200 793" stroke="#000" strokeWidth="10" opacity="0.35" filter="url(#soft2)" />
                        <path d="M930 350h18v460h-18z" fill="#00a000" />
                        <path d="M948 350v460" stroke="#000" strokeWidth="1.300" />
                        <path d="M930 637 1200 793v60L930 810z" fill="#00e000" stroke="#000" strokeWidth="1.300" />
                        <path d="M930 643 1200 799" stroke="#000" />
                    </g>
                    <path d={hole.back} stroke="#000" strokeWidth="1.300" />
                </g>
                <path d={hole.front} stroke="#000" strokeWidth="1.700" strokeLinejoin="round" />
            </g>
        ))}
    </svg>
);

const Triad = () => (
    <svg width="84" height="84" viewBox="290 826 84 84" aria-hidden="true" className="block">
        <path d="M332 878v-26" stroke="#14651c" strokeWidth="6" />
        <path d="m332 839 7 13-4 4h-6l-4-4z" fill="#168a24" stroke="#0a4a10" />
        <path d="m332 841 2 12h-4z" fill="#7be08a" />
        <path d="m332 878-18 11" stroke="#1d1db0" strokeWidth="6" />
        <path d="m300 897 6-11 8 1 1 6-3 4z" fill="#2222c4" stroke="#101070" />
        <path d="m302 896 10-5v2z" fill="#8d90ff" />
        <path d="m332 878 18 11" stroke="#b81d1d" strokeWidth="6" />
        <path d="m365 897-6-11-8 1-1 6 3 4z" fill="#d22424" stroke="#701010" />
        <path d="m363 896-10-5v2z" fill="#ff9a90" />
        <g fontFamily="Open Sans, sans-serif" fontSize="16" fontWeight="300" textAnchor="middle">
            <text x="332" y="839" fill="#0b7a14">Y</text>
            <text x="367" y="904" fill="#e0261b">X</text>
            <text x="296" y="904" fill="#2222b8">Z</text>
        </g>
    </svg>
);

const Scope = () => <path d="m1 20 14-13 3-5c4-3 8 1 8 5l-4 3L9 27c-5 2-9-3-8-7z" fill="url(#paper)" stroke="#555" />;

const viewTools: { label: string; icon: ReactNode; caret?: boolean; width: string }[] = [
    { label: "Zoom to fit", width: "w-[39px]", icon: <Pic w={27}><path d="m2 25 9-9" stroke="#4f93bf" strokeWidth="4.500" strokeLinecap="round" /><circle cx="17" cy="11" r="9" fill="#fff" stroke="#555" strokeWidth="1.500" /><path d="m17 4 2 2.500h-4zM17 18l2-2.500h-4zM10 11l2.500-2v4zM24 11l-2.500-2v4z" fill="#333" /></Pic> },
    { label: "Zoom to area", width: "w-[38px]", icon: <Pic w={28}><path d="M10 1h17v17" stroke="#333" strokeDasharray="3 2" /><path d="m2 25 9-9" stroke="#4f93bf" strokeWidth="4.500" strokeLinecap="round" /><circle cx="17" cy="11" r="8.500" fill="#fff" stroke="#777" strokeWidth="1.500" /></Pic> },
    { label: "Previous view", width: "w-[37px]", icon: <Pic w={28}><Scope /><path d="M1 20c3-2 8 2 8 7M15 7c3 0 6 3 7 6" stroke="#555" /><path d="m13 19 6-6v3h8v6h-8v3z" fill="#3d8fc4" stroke="#17435f" /></Pic> },
    { label: "Section view", width: "w-[37px]", icon: <Pic w={28}><path d="M1 8c4-8 22-8 26 0v15l-8 2V11h-9v16H1z" fill="url(#paper)" stroke="#444" /><path d="M1 10h9v14l-9 3zM19 10h8v12l-8 3z" fill="#3d8fc4" stroke="#17435f" /><path d="m2 18 7-7M2 24l7-7M20 17l6-6M20 23l6-6" stroke="#bfe2f6" /></Pic> },
    { label: "Dynamic annotation views", width: "w-[39px]", icon: <Pic w={30} h={30}><Scope /><path d="M6 0h10l-5 6h3L3 14l3-7H2z" fill="#fdc83a" stroke="#a05a10" /><path d="M12 30v-2l2-1 6-16h3l5 16 2 1v2h-8v-2l1-1-1-3h-4l-1 3 1 1v2zM18.500 21h3l-1-5z" fill="#3583ba" /></Pic> },
    { label: "View orientation", width: "w-[53px]", caret: true, icon: <Pic w={28}><path d="M1 9 9 1h18v17l-8 9M9 1v17h18M19 9l8-8" stroke="#444" /><path d="M1 9h18v18H1z" fill="url(#sky)" stroke="#17435f" /><path d="M14 1v7m-3-3 3 3 3-3M27 14h-7m3-3-3 3 3 3" stroke="#222" strokeWidth="1.500" /></Pic> },
    { label: "Display style", width: "w-[52px]", caret: true, icon: <Pic w={26}><path d="M1 6 13 1l11 4v17l-11 5-12-5z" fill="url(#sky)" stroke="#333" /><path d="M13 10 24 5v17l-11 5z" fill="#f0f6fa" /><path d="m1 6 12 4 11-5M13 10v17" stroke="#333" /></Pic> },
    { label: "Hide/show items", width: "w-[52px]", caret: true, icon: <Pic w={30}><path d="M1 14C7 5 22 5 29 14 22 23 7 23 1 14z" fill="#eee" stroke="#777" /><circle cx="15" cy="14" r="6.500" fill="#555" /><circle cx="15" cy="14" r="2.500" fill="#111" /><path d="M15 2v24" stroke="#222" strokeWidth="1.500" /></Pic> },
    { label: "Edit appearance", width: "w-[38px]", icon: <span className="relative block"><Ball /><span className="absolute top-[12px] left-[12px]"><Pic w={18} h={18}><path d="m1 17 2-6L14 1l3 4L7 15z" fill="#f5c44a" stroke="#6b4a10" /><path d="m12 3 3 4 2-2-3-4z" fill="#c03a2a" /></Pic></span></span> },
    { label: "Apply scene", width: "w-[53px]", caret: true, icon: <span className="relative block"><Pic w={28} h={30}><path d="M.5 12.500h27v17H.5z" fill="#fff" stroke="#333" /><path d="M1 13h5v5H1zM6 18h5v6H6zM1 24h5v5H1zM11 24h6v5h-6zM17 18h5v6h-5zM22 24h5v5h-5zM22 13h5v5h-5z" fill="#222" /></Pic><span className="absolute top-0 left-[3px]"><Ball w={22} /></span></span> },
    { label: "View settings", width: "w-[42px]", caret: true, icon: <Pic w={26}><path d="M1 4h24v16H1z" fill="#d4d4d4" stroke="#333" strokeWidth="2" /><path d="M13 20v5M8 26h10" stroke="#333" strokeWidth="2.500" /></Pic> },
];

const taskPane: { label: string; icon: ReactNode }[] = [
    { label: "Resources", icon: <HomeIcon /> },
    { label: "Design library", icon: <Pic w={26}><path d="m1 4 4-2 5 3 1-3 4 3 1-4 4 3 5 1v18l-12 4L1 22z" fill="#f2f2f2" stroke="#444" strokeWidth="1.300" strokeLinejoin="round" /><path d="m1 4 6 3v17M7 7l3-2 4 2v18M14 7l2-2 4 2v17M20 7l5-2" stroke="#444" /></Pic> },
    { label: "File explorer", icon: <FolderOpenIcon w={32} /> },
    { label: "View palette", icon: <Pic w={28} h={26}><path d="M.5.500h27v25H.5z" fill="#fff" stroke="#333" /><path d="M4 4h11v6H4zM18 4h7v6h-7zM7 13h5v5h4v5H4v-5h3z" fill="#fcc22a" stroke="#5c430a" /><path d="M18 14h9v11h-9z" fill="#d0d0d0" stroke="#777" /></Pic> },
    { label: "Appearances", icon: <Ball /> },
    { label: "Custom properties", icon: <ListIcon header /> },
    { label: "Forum", icon: <Pic w={28}><path d="M1 3h18v12H8l-4 5v-5H1z" fill="url(#blue)" stroke="#17435f" /><path d="M11 10h16v11h-3v5l-5-5h-8z" fill="#f2f2f2" stroke="#333" strokeWidth="1.300" /></Pic> },
];

const GraphicsArea = () => (
    <main className="relative flex min-w-0 flex-1 flex-col overflow-hidden bg-white">
        <div className="absolute inset-x-0 top-[18px] flex justify-center pl-[2px]"><VentModel /></div>
        <div className="relative flex h-[40px] justify-center">
            <div className="flex items-center self-start pt-[4px] pr-[2px] opacity-75">
                {viewTools.map((tool) => (
                    <button key={tool.label} aria-label={tool.label} className={`flex h-[34px] shrink-0 items-center gap-[7px] ${tool.width}`}>
                        {tool.icon}
                        {tool.caret && <Caret dim />}
                    </button>
                ))}
            </div>
        </div>
        <nav aria-label="Task pane" className="absolute top-[67px] right-0 flex w-[40px] flex-col border-t-2 border-l-2 border-[#8a8a8a] bg-[#d3d3d3]">
            {taskPane.map((item, i) => (
                <button key={item.label} aria-label={item.label} className={`flex h-[36px] items-center justify-center border-b-2 border-[#8a8a8a] ${i === 0 ? "bg-[#f7f7f7]" : ""}`}>
                    {item.icon}
                </button>
            ))}
        </nav>
        <div className="relative mt-auto pl-[13px]">
            <div className="mb-[21px] ml-[6px]"><Triad /></div>
            <p className="font-[Lato] text-[21px] leading-[24px] font-black text-[#1a1a1a]">*Isometric</p>
        </div>
    </main>
);

/* ---------- bottom bars ---------- */

const navArrows = [
    { label: "First", d: "M4 3v12M14 3v12l-8-6z" },
    { label: "Previous", d: "M13 3v12L5 9z" },
    { label: "Next", d: "M5 3v12l8-6z" },
    { label: "Last", d: "M14 3v12M4 3v12l8-6z" },
];

const ModelTabs = () => (
    <nav className="flex h-[26px] shrink-0 border-y-2 border-[#8a8a8a] bg-[#f7f7f7] text-[18px] leading-[21px]">
        <div className="flex w-[124px] shrink-0 justify-end border-r border-[#8a8a8a]">
            {navArrows.map((arrow) => (
                <button key={arrow.label} aria-label={arrow.label} className="flex w-[24px] items-center justify-center border border-[#8e90a5] bg-[#a9adc0]">
                    <Pic w={18} h={18}><path d={arrow.d} fill="#8688a0" stroke="#77799a" strokeWidth="1.500" /></Pic>
                </button>
            ))}
        </div>
        <button className="w-[87px] pl-[5px] font-bold text-black">Model</button>
        <button className="w-[104px] border-x border-[#8a8a8a] bg-[#d3d3d3] text-[#222]">3D Views</button>
        <button className="w-[171px] border-r-2 border-[#8a8a8a] bg-[#d3d3d3] pr-[12px] text-[#222]">Motion Study 1</button>
    </nav>
);

const StatusBar = () => (
    <footer className="flex h-[27px] shrink-0 items-center bg-[#f7f7f7] text-[17px] text-[#111]">
        <span className="pt-[2px] pl-[1px]">SOLIDWORKS Premium 2020 SP0.0</span>
        <Pic w={30} h={26} className="ml-auto">
            <path d="M1 25h5v-2H1zM8 25h4v-4H8zM14 25h4v-6h-4zM20 25h6V13h-6z" fill="#1f5f8a" />
            <path d="M3 22c10 0 16-5 17-14h-4l7-8 7 8h-4c-1 10-9 16-23 14z" fill="#222" />
            <path d="M8 1 15.500 16H.5z" fill="#fcc419" stroke="#a05a10" strokeLinejoin="round" />
            <path d="M8 5v6M8 12.500v2" stroke="#111" strokeWidth="2" />
        </Pic>
        <button className="mr-[45px] ml-[82px] flex items-center gap-[26px] pt-[2px]">
            MMGS
            <Pic w={6} h={4}><path d="M0 4h6L3 0z" fill="#333" /></Pic>
        </button>
    </footer>
);

const apps: { label: string; icon: ReactNode; open?: boolean; active?: boolean }[] = [
    { label: "Start", icon: <Pic w={36} h={36}><path d="M1 1h16v16H1zM19 1h16v16H19zM1 19h16v16H1zM19 19h16v16H19z" fill="url(#winlogo)" /></Pic> },
    { label: "Search", icon: <Pic w={36} h={36}><path d="m25 26 8 8" stroke="#1480d8" strokeWidth="4" strokeLinecap="round" /><circle cx="16" cy="16" r="13" fill="#3a5072" stroke="#1480d8" strokeWidth="3.500" /><path d="M16 3c8 0 13 6 13 13" stroke="#45c46c" strokeWidth="3.500" /></Pic> },
    { label: "Task view", icon: <Pic w={38} h={36}><rect x="1" y="11" width="27" height="24" rx="2" fill="#58595e" /><rect x="10" y="1" width="27" height="25" rx="2" fill="#f2f2f2" /><path d="M10 11h18v15H12l-2-2z" fill="#a9a9a9" /></Pic> },
    { label: "Mouse", icon: <Pic w={20} h={30}><path d="M1 11c0-6 3-10 8-10v10zM19 11c0-6-3-10-8-10v10zM1 13h18v7c0 11-18 11-18 0z" fill="#2b3142" /></Pic> },
    {
        label: "Edge",
        icon: <Pic w={38} h={38}><circle cx="19" cy="19" r="18" fill="#1365b5" /><path d="M1 19C1 8 10 1 19 1c11 0 18 7 18 16 0 6-5 9-10 9-4 0-5-2-4-4 4-6-1-11-8-11C8 11 2 15 1 19z" fill="url(#edge)" /><path d="M13 21c0 9 8 13 17 10-4 5-9 6-13 5C7 35 4 22 15 14c-2 2-2 5-2 7z" fill="#0c4f94" /><path d="M22 23c-2 1-1 4 5 4 4 0 7-1 9-3-2 4-5 6-10 6-7 0-10-8-6-12 2 0 4 2 2 5z" fill="#15204f" /></Pic>,
    },
    { label: "File Explorer", open: true, icon: <Pic w={38} h={36}><path d="M1 3c0-2 1-2 3-2h8l4 4H1z" fill="#d9930d" /><path d="M1 4h34c2 0 2 1 2 3v26c0 2-1 2-3 2H3c-2 0-2-1-2-3z" fill="#fcca3f" /><path d="M7 35V28c0-3 2-4 4-4h16c3 0 5 1 5 4v7z" fill="#1478cf" /><path d="M13 29h13" stroke="#0a4c8c" strokeWidth="2" /></Pic> },
    { label: "Store", icon: <Pic w={36} h={38}><path d="M10 8V2h16v6" stroke="#38a6ee" strokeWidth="3" /><rect x="1" y="6" width="34" height="31" rx="3" fill="#f2f2f2" /><path d="M11 13h7v7h-7z" fill="#f25022" /><path d="M19 13h7v7h-7z" fill="#7fba00" /><path d="M11 21h7v7h-7z" fill="#00a4ef" /><path d="M19 21h7v7h-7z" fill="#ffb900" /></Pic> },
    { label: "Outlook", icon: <Pic w={38} h={34}><path d="m7 11 15-10 14 11v20H9z" fill="#1478cf" /><path d="m20 2 12 10-10 9-9-12z" fill="#28a2e8" /><path d="M8 33 37 13v17c0 2-1 3-3 3z" fill="#50d0f7" /><path d="m8 21 22 12H10c-2 0-2-1-2-3z" fill="#1ba1e6" /><rect x="0" y="8" width="18" height="18" rx="2" fill="#0f6cbd" /><circle cx="9" cy="17" r="4" stroke="#fff" strokeWidth="2.500" /></Pic> },
    { label: "This PC", icon: <Pic w={34} h={32}><path d="M1 2h32v22H1z" fill="#2bb8e6" stroke="#8fa4b0" /><path d="M17 24v5M10 30h14" stroke="#a9b4ba" strokeWidth="3" /><path d="M1 24 33 4v20z" fill="#1683c8" opacity=".5" /></Pic> },
    { label: "Telegram", icon: <Pic w={34} h={34}><circle cx="17" cy="17" r="16.500" fill="#2ba4df" /><path d="m6 17 20-9-4 19-7-5-3 4v-6l11-10-13 9z" fill="#fff" /></Pic> },
    { label: "CLion", icon: <Pic w={38} h={38}><path d="m1 4 15-3 8 20L8 34 3 20z" fill="#15a0ee" /><path d="m20 1 12-1 5 12-8 8-12-9z" fill="#f0608f" /><path d="m30 12 8 4v18l-5 4H16l-3-6z" fill="#25cf7c" /><path d="m4 26 12-6 4 14-10 3-6-3z" fill="#ea5c9a" /><path d="M8 7h23v23H8z" fill="#000" /><text x="10" y="19" fill="#fff" fontFamily="Inter, sans-serif" fontWeight="700" fontSize="12">CL</text><path d="M11 26h9" stroke="#fff" strokeWidth="1.500" /></Pic> },
    { label: "Discord", icon: <Pic w={36} h={38}><ellipse cx="18" cy="19" rx="17.500" ry="18" fill="#5865f2" /><path d="M9 12c3-2 5-2 6-2l1 1.500h4L21 10c2 0 4 1 6 2 2 4 3 8 3 12-2 2-4 3-6 3l-2-3h-8l-2 3c-2 0-4-1-6-3 0-4 1-8 3-12z" fill="#fff" /><ellipse cx="14" cy="20" rx="2" ry="2.500" fill="#5865f2" /><ellipse cx="22" cy="20" rx="2" ry="2.500" fill="#5865f2" /></Pic> },
    { label: "Teams", icon: <Pic w={38} h={36}><circle cx="19" cy="6" r="5.500" fill="#7b83eb" /><circle cx="30" cy="8" r="4" fill="#5059c9" /><path d="M11 13h16v12c0 10-14 12-16 2z" fill="#7b83eb" /><path d="M27 13h9v12h-9z" fill="#5059c9" /><rect x="0" y="8" width="18" height="18" rx="1.500" fill="#4b53bc" /><path d="M5 12.500h8M9 12.500V22" stroke="#fff" strokeWidth="2" /><circle cx="28" cy="25" r="9" fill="#fbecd2" /><text x="28" y="29" textAnchor="middle" fill="#6b3b12" fontFamily="Open Sans, sans-serif" fontSize="11">3</text></Pic> },
    { label: "WhatsApp", open: true, icon: <Pic w={38} h={38}><path d="M3 36 5.500 27C-1 14 7 2 19.500 2 29 2 36 9.500 36 18.500 36 30 24 38 12 33z" stroke="#25d366" strokeWidth="3.500" strokeLinejoin="round" /><path d="M12 11c2-2 4-1 5 2 1 2-1 3-1 4 1 3 3 5 6 6 2 0 2-3 4-2 4 1 4 3 2 5-6 6-21-7-16-15z" fill="#25d366" /></Pic> },
    { label: "Excel", icon: <Pic w={36} h={34}><path d="M9 1h14v16H9z" fill="#21a366" /><path d="M22 1h11c2 0 2 1 2 2v7H22z" fill="#33c481" /><path d="M22 9h13v9H22z" fill="#21a366" /><path d="M9 17h26v14c0 1 0 2-2 2H11c-2 0-2-1-2-2z" fill="#185c37" /><path d="M22 17h13v8H22z" fill="#107c41" /><rect x="0" y="8" width="19" height="18" rx="1.500" fill="#107c41" /><path d="m6 12 7 10M13 12 6 22" stroke="#fff" strokeWidth="2.200" /></Pic> },
    { label: "Chrome", open: true, icon: <Pic w={44} h={44} className="-mt-[6px] ml-[8px]"><circle cx="18" cy="26" r="18" fill="#2f9e44" /><path d="M18 26 2.500 17A18 18 0 0 1 33.500 17z" fill="#e33b2e" /><path d="M18 8a18 18 0 0 1 15.500 9H18z" fill="#e33b2e" /><path d="M18 17h15.500A18 18 0 0 1 17 44l9-13z" fill="#fbc116" /><circle cx="18" cy="26" r="8.500" fill="#fff" /><circle cx="18" cy="26" r="6.500" fill="#3b7ded" /><circle cx="32" cy="12" r="12" fill="#050505" /><path d="M32 3v4" stroke="#f7d27a" strokeWidth="4" /><path d="m29 9 6 0 1 6-2 8h-4l-1-8zM28 10l-2 7M36 8l3-3" stroke="#5f88b0" strokeWidth="2" fill="#557a9e" /></Pic> },
    {
        label: "SOLIDWORKS 2020", active: true,
        icon: <Pic w={40} h={38}><path d="M1 8 19 1l16 5v21l-15 9L1 28z" fill="#b71d1a" /><path d="M1 8 19 1l16 5-16 6z" fill="#ee3a30" /><path d="M19 12 35 6v21l-15 9z" fill="#6e1010" /><g fill="#fff" fontFamily="Open Sans, sans-serif" fontWeight="800"><text x="4" y="27" fontSize="17">S</text><text x="17" y="26" fontSize="15">W</text><text x="15" y="36" fontSize="9">2020</text></g></Pic>,
    },
];

const Taskbar = () => (
    <div className="relative flex h-[71px] shrink-0 items-center border-t-2 border-[#3c4350] bg-[linear-gradient(90deg,#1c2129_0%,#1d222b_14%,#15214a_22%,#131f57_32%,#15204f_44%,#1c2136_52%,#1d2132_62%,#14204f_69%,#141f54_72%,#1b2033_77%,#1c2129_100%)] text-white">
        <button aria-label="Weather, 33 degrees" className="relative w-[351px] shrink-0 self-stretch">
            <span className="absolute top-[17px] left-[29px]">
                <Pic w={38} h={34}>
                    <path d="M16 3c1-3 5-3 6 0l14 26c1 3 0 4-3 4H4c-3 0-4-2-3-4z" fill="#ea5a0b" />
                    <circle cx="13" cy="22" r="3.500" fill="#fff" />
                    <path d="M13 16v12M7 22h12M9 18l8 8M17 18l-8 8" stroke="#fff" />
                    <path d="M22 12v13" stroke="#fff" strokeWidth="4" />
                    <circle cx="22" cy="27" r="3.500" fill="#fff" />
                    <path d="M22 16v11" stroke="#ea5a0b" strokeWidth="1.500" />
                </Pic>
            </span>
            <span className="absolute top-[7px] left-[43px] rounded-full bg-[#2f2f2f] px-[5px] text-[16px] leading-[23px]">33°</span>
        </button>
        <div className="flex self-stretch pb-[3px]">
            {apps.map((app) => (
                <button key={app.label} aria-label={app.label} className="relative flex w-[66px] items-center justify-center">
                    <span className={`flex h-[60px] w-[60px] items-center justify-center rounded-md ${app.active ? "border border-[#3d3f4b] bg-[#2c2e3a]" : ""}`}>{app.icon}</span>
                    {app.open && <span className="absolute bottom-[4px] h-[5px] w-[9px] rounded-full bg-[#9aa0a8]" />}
                    {app.active && <span className="absolute bottom-[4px] h-[5px] w-[24px] rounded-full bg-[#3fb2f5]" />}
                </button>
            ))}
        </div>
        <span lang="ar" dir="rtl" className="pointer-events-none absolute -top-[18px] left-[844px] font-['DejaVu_Sans'] text-[68px] leading-[80px] font-bold text-[#9a9cab]/50">خمسات</span>
        <div className="ml-auto flex items-center pr-[29px] pb-[3px]">
            <button aria-label="Show hidden icons"><Pic w={18} h={12}><path d="m2 10 7-8 7 8" stroke="#fff" strokeWidth="2" /></Pic></button>
            <button lang="ar" className="ml-[42px] w-[12px] font-['DejaVu_Sans'] text-[17px]">ع</button>
            <button aria-label="Network, volume and battery" className="ml-[39px] flex items-center gap-[12px]">
                <Pic w={24} h={22}><path d="M1 8c6-8 16-8 22 0M4.500 12c4-6 11-6 15 0M8 16c2-4 6-4 8 0" stroke="#fff" strokeWidth="2" /><circle cx="12" cy="19" r="2.200" fill="#fff" /></Pic>
                <Pic w={24} h={22}><path d="M1 8h4l6-6v18l-6-6H1z" stroke="#fff" strokeWidth="1.600" /><path d="M14 7c2 2 2 6 0 8M17 5c4 4 4 8 0 12M20 2c5 5 5 13 0 18" stroke="#fff" strokeWidth="1.600" /></Pic>
                <Pic w={24} h={22}><rect x="1.500" y="6" width="18" height="14" rx="3" stroke="#fff" strokeWidth="2" /><path d="M5 9h11v8H5zM21 10h3v6h-3z" fill="#fff" /><path d="m4 0-3 7h3L3 12l5-7H5l1-5z" fill="#fff" stroke="#1c2129" strokeWidth=".6" /></Pic>
            </button>
            <time dateTime="2025-08-14T22:49" className="w-[107px] text-right text-[17px] leading-[24px]">
                10:49 PM
                <br />
                8/14/2025
            </time>
        </div>
    </div>
);

export default function App() {
    return (
        <div className="flex h-screen flex-col overflow-hidden bg-white font-['Open_Sans','Noto_Sans',sans-serif]">
            <Defs />
            <TitleBar />
            <Ribbon />
            <div className="relative shrink-0">
                <CommandTabs />
                <div className="absolute top-[11px] right-[16px] flex items-center gap-[18px]">
                    <button aria-label="Previous window"><Pic w={20} h={22}><path d="M1 1h17v20H1z" stroke="#a0a0a0" strokeWidth="1.500" /><path d="M7 6v8l-5-4z" fill="#888" /></Pic></button>
                    <button aria-label="Next window"><Pic w={20} h={22}><path d="M1 1h17v20H1z" stroke="#a0a0a0" strokeWidth="1.500" /><path d="M13 6v8l5-4z" fill="#888" /></Pic></button>
                    <WindowButtons color="#a0a0a0" />
                </div>
            </div>
            <div className="flex min-h-0 flex-1">
                <FeaturePanel />
                <GraphicsArea />
            </div>
            <ModelTabs />
            <StatusBar />
            <Taskbar />
        </div>
    );
}
